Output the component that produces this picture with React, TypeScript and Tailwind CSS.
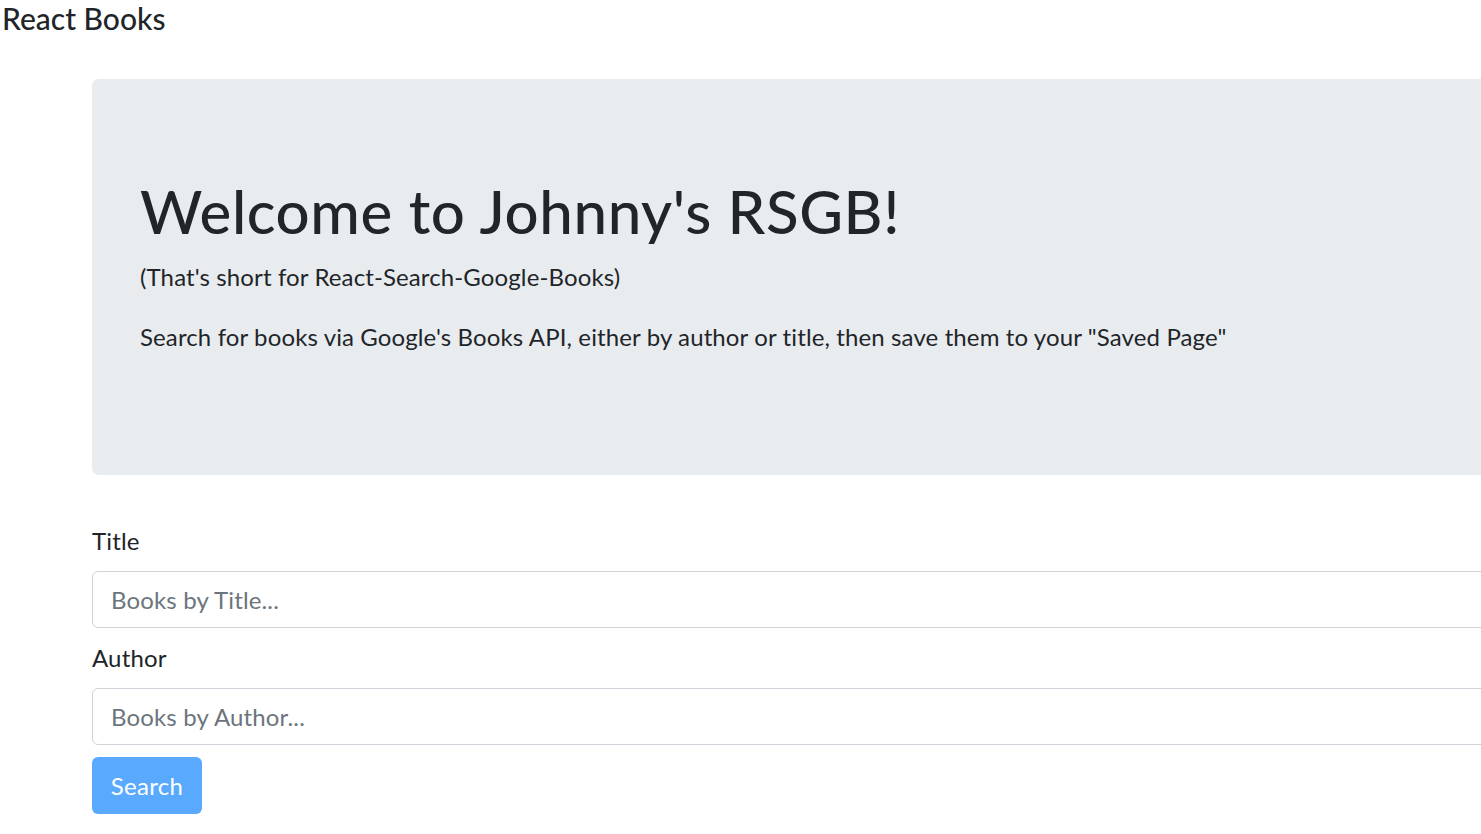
import React from "react";

const font = "font-['Lato','Liberation_Sans',sans-serif]";

const Field = ({ label, placeholder }: { label: string; placeholder: string }) => {
  return (
    <div className="mb-[12px]">
      <label className="block text-[24px] leading-[36px] tracking-[0.15px] mb-[12px]">{label}</label>
      <input
        type="text"
        placeholder={placeholder}
        className={`block w-full h-[57px] px-[18px] text-[24px] tracking-[0.15px] bg-white border-[1.5px] border-[#ced4da] rounded-[6px] outline-none placeholder:text-[#6c757d] ${font}`}
      />
    </div>
  );
};

export default function App() {
  return (
    <div className={`w-[1481px] h-[834px] overflow-hidden bg-white text-[#212529] ${font}`}>
      <div className="h-[79px] pl-[2px]">
        <span className="block text-[30px] leading-[36px] font-medium">React Books</span>
      </div>
      <div className="ml-[92px] w-[1450px]">
        <div className="bg-[#e9ecef] rounded-[7px] px-[48px] py-[96px] mb-[48px]">
          <h1 className="text-[60px] leading-[72px] font-medium tracking-[0.6px] mb-[12px]">Welcome to Johnny's RSGB!</h1>
          <p className="text-[24px] leading-[36px] tracking-[0.12px] mb-[24px]">(That's short for React-Search-Google-Books)</p>
          <p className="text-[24px] leading-[36px] tracking-[0.12px] mb-[24px]">
            Search for books via Google's Books API, either by author or title, then save them to your "Saved Page"
          </p>
        </div>
        <form onSubmit={(e) => e.preventDefault()}>
          <Field label="Title" placeholder="Books by Title..." />
          <Field label="Author" placeholder="Books by Author..." />
          <button
            type="submit"
            disabled
            className="h-[57px] w-[110px] bg-[#59a9ff] text-white text-[24px] tracking-[0.3px] rounded-[6px]"
          >
            Search
          </button>
        </form>
      </div>
    </div>
  );
}
